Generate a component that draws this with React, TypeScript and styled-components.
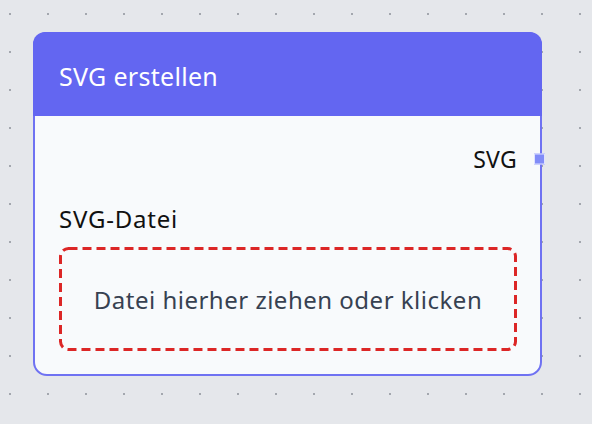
import React from "react";
import styled, { createGlobalStyle } from "styled-components";

const GlobalStyle = createGlobalStyle`
  html, body {
    margin: 0;
    padding: 0;
  }
  body {
    font-family: "Noto Sans", "DejaVu Sans", sans-serif;
  }
`;

const Canvas = styled.div`
  width: 592px;
  height: 424px;
  overflow: hidden;
  background-color: #e5e7eb;
  background-image: radial-gradient(circle, #a3a7ae 1px, transparent 1.4px);
  background-size: 38px 38px;
  background-position: -9px -5px;
  padding: 32px 0 0 33px;
  box-sizing: border-box;
`;

const Node = styled.div`
  position: relative;
  width: 509px;
  height: 344px;
  box-sizing: border-box;
  background: #f8fafc;
  border: 2px solid #6f72f2;
  border-radius: 14px;
  display: flex;
  flex-direction: column;
`;

const Header = styled.div`
  height: 84px;
  background: #6366f1;
  border-radius: 12px 12px 0 0;
  margin: -2px -2px 0;
  display: flex;
  align-items: center;
  padding: 0 0 0 26px;
  box-sizing: border-box;
`;

const Title = styled.h2`
  margin: 0;
  color: #ffffff;
  font-size: 25px;
  font-weight: 400;
  letter-spacing: 0.3px;
  padding-top: 4px;
`;

const Body = styled.div`
  display: flex;
  flex-direction: column;
  padding: 28px 23px 0 24px;
`;

const OutputRow = styled.div`
  position: relative;
  display: flex;
  justify-content: flex-end;
  align-items: center;
  height: 30px;
`;

const OutputLabel = styled.span`
  font-size: 23px;
  color: #111111;
  letter-spacing: 0.3px;
`;

const Handle = styled.span`
  position: absolute;
  right: -28px;
  top: 50%;
  width: 9px;
  height: 9px;
  transform: translateY(-50%);
  background: #818cf8;
  border: 1px solid #dfe2ff;
`;

const FieldLabel = styled.label`
  margin-top: 30px;
  font-size: 24px;
  color: #111111;
  letter-spacing: 0.8px;
  line-height: 30px;
`;

const DropZone = styled.div`
  position: relative;
  margin-top: 13px;
  height: 104px;
  display: flex;
  align-items: center;
  justify-content: center;
  cursor: pointer;
`;

const DashedFrame = styled.svg`
  position: absolute;
  inset: 0;
  width: 100%;
  height: 100%;
  overflow: visible;
`;

const DropText = styled.span`
  font-size: 24px;
  color: #374151;
  letter-spacing: 0.5px;
`;

export default function App() {
  return (
    <>
      <GlobalStyle />
      <Canvas>
        <Node>
          <Header>
            <Title>SVG erstellen</Title>
          </Header>
          <Body>
            <OutputRow>
              <OutputLabel>SVG</OutputLabel>
              <Handle />
            </OutputRow>
            <FieldLabel>SVG-Datei</FieldLabel>
            <DropZone>
              <DashedFrame>
                <rect
                  x="1.5"
                  y="1.5"
                  width="calc(100% - 3px)"
                  height="calc(100% - 3px)"
                  rx="8"
                  fill="none"
                  stroke="#dc2626"
                  strokeWidth="3"
                  strokeDasharray="9 5"
                />
              </DashedFrame>
              <DropText>Datei hierher ziehen oder klicken</DropText>
            </DropZone>
          </Body>
        </Node>
      </Canvas>
    </>
  );
}
